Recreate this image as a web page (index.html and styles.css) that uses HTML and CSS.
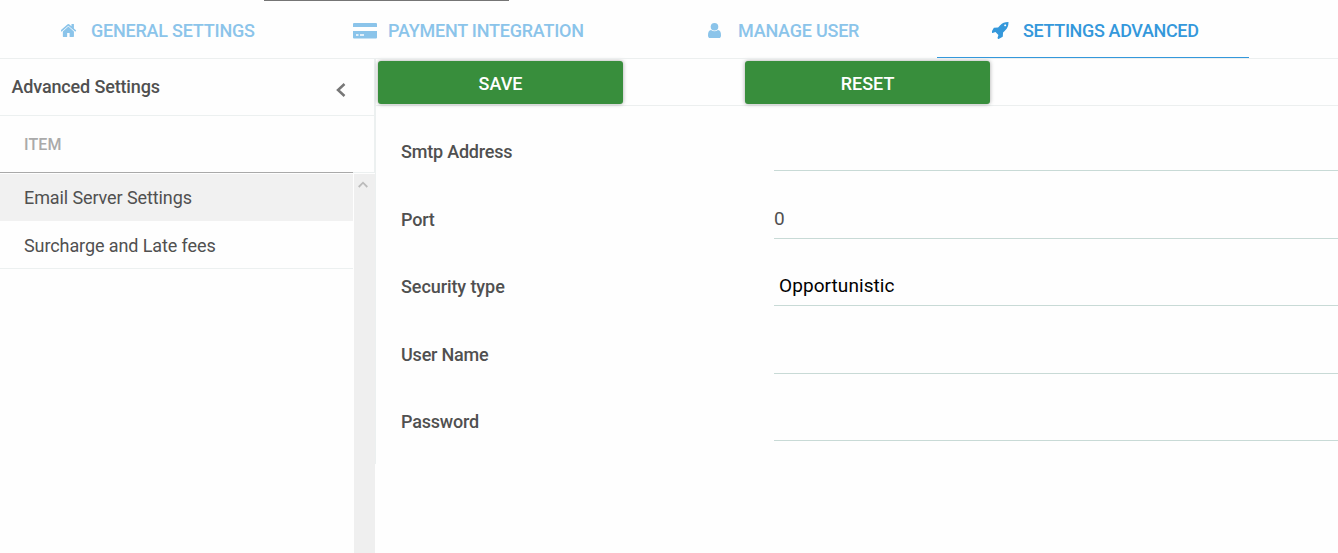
FILE: index.html
```
<!DOCTYPE html>
<html lang="en">
<head>
<meta charset="utf-8">
<title>Advanced Settings</title>
<link rel="stylesheet" href="styles.css">
</head>
<body>
<header class="tabs">
  <div class="top-mark"></div>
  <a class="tab general"><svg class="ic-home" viewBox="64 253 1664 1283" preserveAspectRatio="none"><path d="M1408 992v480q0 26-19 45t-45 19h-384v-384h-256v384h-384q-26 0-45-19t-19-45v-480q0-1 .5-3t.5-3l575-474 575 474q1 2 1 6zm223-69l-62 74q-8 9-21 11h-3q-13 0-21-7l-692-577-692 577q-12 8-24 7-13-2-21-11l-62-74q-8-10-7-23.5t11-21.5l719-599q32-26 76-26t76 26l244 204v-195q0-14 9-23t23-9h192q14 0 23 9t9 23v408l219 182q10 8 11 21.5t-7 23.5z"/></svg><span>GENERAL SETTINGS</span></a>
  <a class="tab payment"><svg class="ic-card" viewBox="0 0 24 16"><path d="M1 0h22Q24 0 24 1V4H0V1Q0 0 1 0zM0 8h24v6.500q0 1-1 1H1q-1 0-1-1zM3 11.300v1.500h2.500v-1.500zM7 11.300v1.500h4v-1.500z" fill-rule="evenodd"/></svg><span>PAYMENT INTEGRATION</span></a>
  <a class="tab manage"><svg class="ic-user" viewBox="0 0 13 15"><circle cx="6.500" cy="3.800" r="3.800"/><path d="M3 7q3.500 2.600 7 0 3 .2 3 5.200 0 2.800-2 2.800H2q-2 0-2-2.800Q0 7.200 3 7z"/></svg><span>MANAGE USER</span></a>
  <a class="tab advanced active"><svg class="ic-rocket" viewBox="128 128 1536 1632"><path d="M1440 448q0-40-28-68t-68-28-68 28-28 68 28 68 68 28 68-28 28-68zm224-288q0 249-75.500 430.500t-253.500 360.500q-81 80-195 176l-20 379q-2 16-16 26l-384 224q-7 4-16 4-12 0-23-9l-64-64q-13-14-8-32l85-276-281-281-276 85q-3 1-9 1-14 0-23-9l-64-64q-17-19-5-39l224-384q10-14 26-16l379-20q96-114 176-195 188-187 358-258t431-71q14 0 24 9.500t10 22.500z"/></svg><span>SETTINGS ADVANCED</span></a>
</header>
<main class="body">
  <aside class="side">
    <div class="side-head"><span>Advanced Settings</span><svg class="chev" viewBox="0 0 10 14"><path d="M8.500 1L2 7l6.500 6"/></svg></div>
    <div class="item-head"><div>ITEM</div></div>
    <div class="list">
      <div class="rows">
        <div class="row selected"><span>Email Server Settings</span></div>
        <div class="row"><span>Surcharge and Late fees</span></div>
      </div>
      <div class="scroll"><svg viewBox="0 0 10 7"><path d="M.700 6L5 1.700 9.300 6"/></svg></div>
    </div>
  </aside>
  <section class="content">
    <div class="toolbar"><button class="btn"><span>SAVE</span></button><button class="btn"><span>RESET</span></button></div>
    <div class="form">
      <div class="field"><label>Smtp Address</label><div class="value"></div></div>
      <div class="field"><label>Port</label><div class="value"><span class="port">0</span></div></div>
      <div class="field"><label class="security">Security type</label><div class="value"><span class="select">Opportunistic</span></div></div>
      <div class="field"><label>User Name</label><div class="value"></div></div>
      <div class="field"><label>Password</label><div class="value"></div></div>
    </div>
  </section>
</main>
</body>
</html>
```
FILE: styles.css
```
* { box-sizing: border-box; }
body { margin: 0; height: 553px; overflow: hidden; background: #fefefe; color: #505050; font-family: Roboto, sans-serif; font-size: 18px; }
.tabs { position: relative; display: flex; height: 59px; padding-left: 1px; border-bottom: 1px solid #ecefef; }
.top-mark { position: absolute; left: 264px; top: 0; width: 245px; height: 1px; background: #757575; }
.tab { display: flex; align-items: center; width: 312px; height: 57px; padding-top: 4px; color: #8bc4ea; font-weight: 500; letter-spacing: -.22px; white-space: nowrap; }
.tab svg { fill: currentColor; flex: none; }
.active { height: 58px; border-bottom: 1px solid #3498db; color: #3498db; letter-spacing: -.36px; }
.general { padding-left: 60px; }
.payment { padding-left: 40px; }
.manage { padding-left: 83px; }
.advanced { padding-left: 55px; }
.ic-home { width: 16px; height: 13px; margin-right: 14px; }
.ic-card { width: 24px; height: 16px; margin-right: 11px; }
.ic-user { width: 13px; height: 15px; margin-right: 17px; }
.ic-rocket { width: 17px; height: 17px; margin-right: 14px; }
.body { display: flex; height: 494px; }
.side { display: flex; flex-direction: column; width: 375px; }
.side-head { display: flex; justify-content: space-between; width: 375px; height: 57px; padding: 0 28px 0 11.5px; border-right: 1px solid #ecf0f0; border-bottom: 1px solid #ecf0f0; font-weight: 500; letter-spacing: -.15px; line-height: 56px; }
.chev { width: 10px; height: 14px; margin-top: 24px; fill: none; stroke: #777; stroke-width: 2.5; }
.item-head { width: 375px; height: 57px; border-right: 1px solid #ecf0f0; border-bottom: 1px solid #ecf0f0; }
.item-head div { width: 353px; height: 57px; padding-left: 24px; border-bottom: 1px solid #a9a9a9; color: #aaa; font-size: 16px; font-weight: 500; letter-spacing: .15px; line-height: 58px; }
.list { display: flex; flex: 1; justify-content: space-between; margin-top: 1px; }
.rows { width: 353px; }
.row { height: 48px; padding-left: 24px; border-bottom: 1px solid #ecf0f0; letter-spacing: -.1px; line-height: 49px; }
.row.selected { height: 47px; border: 0; background: #f1f1f1; line-height: 47px; }
.scroll { width: 21px; background: #efefef; }
.scroll svg { display: block; width: 10px; height: 7px; margin: 7px 0 0 4px; fill: none; stroke: #bbb; stroke-width: 1.8; }
.content { flex: 1; height: 405px; border-left: 1px solid #ecf0f0; }
.toolbar { display: flex; gap: 122px; height: 47px; padding: 2px 0 0 2px; border-bottom: 1px solid #ecefef; }
.btn { width: 245px; height: 43px; padding: 1px 0 0; border: 0; border-radius: 3px; background: #388e3c; box-shadow: 0 0 4px rgba(0,0,0,.35); color: #fff; font: 500 18px Roboto, sans-serif; }
.form { padding-left: 25px; }
.field { display: flex; height: 67.5px; }
.field:first-child { height: 65px; }
.field label { width: 373px; align-self: flex-end; padding-bottom: 8px; font-weight: 500; letter-spacing: -.2px; line-height: 22px; }
.field .security { letter-spacing: -.08px; }
.value { display: flex; flex: 1; align-items: flex-end; border-bottom: 1px solid #c8dad6; line-height: 22px; padding-bottom: 8px; }
.port { font-size: 19px; }
.select { padding-left: 5px; color: #000; font-size: 19px; letter-spacing: .08px; }
```
